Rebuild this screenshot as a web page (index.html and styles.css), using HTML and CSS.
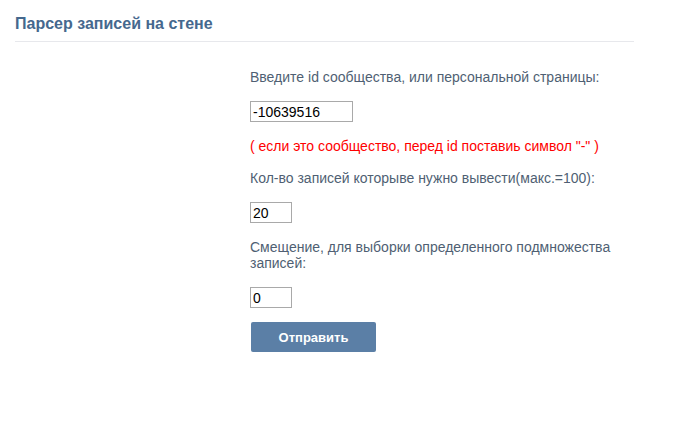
FILE: index.html
```html
<!DOCTYPE html>
<html lang="ru">
<head>
<meta charset="utf-8">
<title>Парсер записей на стене</title>
<link rel="stylesheet" href="styles.css">
</head>
<body>
<div class="page">
  <div class="header">Парсер записей на стене</div>
  <form class="form" onsubmit="return false">
    <div class="label">Введите id сообщества, или персональной страницы:</div>
    <input class="field wide" type="text" value="-10639516">
    <div class="label warn">( если это сообщество, перед id поставиь символ "-" )</div>
    <div class="label">Кол-во записей которыве нужно вывести(макс.=100):</div>
    <input class="field short" type="text" value="20">
    <div class="label">Смещение, для выборки определенного подмножества записей:</div>
    <input class="field short" type="text" value="0">
    <button class="submit" type="submit">Отправить</button>
  </form>
</div>
</body>
</html>
```

FILE: styles.css
```css
html, body {
  margin: 0;
  padding: 0;
  background: #ffffff;
}
.page {
  font-family: "Liberation Sans", Arial, sans-serif;
  width: 619px;
  margin-left: 15px;
}
.header {
  font-size: 16px;
  font-weight: bold;
  color: #45688e;
  line-height: 18px;
  padding-top: 15px;
  padding-bottom: 8px;
  border-bottom: 1px solid #e7e8ec;
}
.form {
  display: flex;
  flex-direction: column;
  align-items: flex-start;
  margin-left: 235px;
  width: 380px;
  padding-top: 27px;
}
.label {
  font-size: 14px;
  line-height: 16px;
  color: #4f5f73;
  margin-bottom: 16px;
}
.warn {
  color: #ff0000;
}
.field {
  box-sizing: border-box;
  height: 21px;
  border: 1px solid #a9a9a9;
  padding: 1px 2px;
  margin: 0 0 16px 0;
  font-family: "Liberation Sans", Arial, sans-serif;
  font-size: 14px;
  color: #000;
  background: #fff;
  outline: none;
}
.wide { width: 103px; }
.short { width: 42px; }
.submit {
  margin-top: -2px;
  margin-left: 1px;
  width: 125px;
  height: 30px;
  border: none;
  border-radius: 2px;
  background: #5b7fa6;
  color: #ffffff;
  font-family: "Liberation Sans", Arial, sans-serif;
  font-size: 13px;
  font-weight: bold;
  padding: 0;
  cursor: pointer;
}
```
